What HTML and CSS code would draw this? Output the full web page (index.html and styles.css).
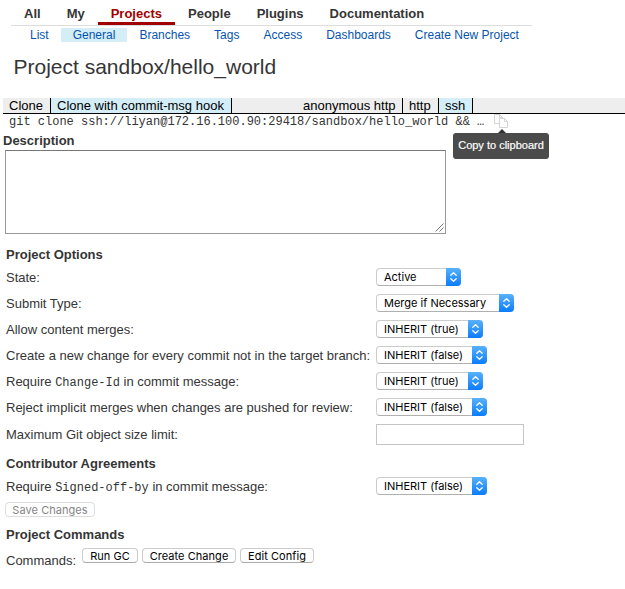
FILE: index.html
```
<!DOCTYPE html>
<html lang="en">
<head>
<meta charset="utf-8">
<title>Project sandbox/hello_world</title>
<link rel="stylesheet" href="styles.css">
</head>
<body>
<svg class="defs" width="0" height="0"><symbol id="arrows" viewBox="0 0 15 18"><path d="M4.8 7.3 7.5 4.8 10.2 7.3M4.8 10.7 7.5 13.2 10.2 10.7" fill="none" stroke="#fff" stroke-width="1.3" stroke-linecap="round" stroke-linejoin="round"/></symbol></svg>
<nav class="tabs"><a>All</a><a>My</a><a class="current">Projects</a><a>People</a><a>Plugins</a><a>Documentation</a></nav>
<nav class="links"><a>List</a><a class="current">General</a><a>Branches</a><a>Tags</a><a>Access</a><a>Dashboards</a><a>Create New Project</a></nav>
<h1>Project sandbox/hello_world</h1>
<div class="clone-bar">
  <span class="clone-tab">Clone</span><span class="clone-tab on">Clone with commit-msg hook</span>
  <span class="scheme anonymous">anonymous http</span><span class="scheme">http</span><span class="scheme on">ssh</span>
</div>
<div class="command"><code>git clone ssh://liyan@172.16.100.90:29418/sandbox/hello_world &amp;&amp; …</code>
  <span class="copy">
    <svg width="15" height="15" viewBox="0 0 15 15" fill="#fff" stroke="#d4d4d4"><path d="M.5.5h5l3 3v6h-8zM5.500.5v3h3"/><path d="M5.500 4.500h5l3 3v6h-8zM10.500 4.500v3h3"/></svg>
    <span class="tip">Copy to clipboard</span>
  </span>
</div>
<h2 class="desc-title">Description</h2>
<div class="textarea"><svg width="9" height="9" viewBox="0 0 9 9" stroke="#777" fill="none"><path d="M.5 8.500 8.500.5M4.500 8.500 8.500 4.500"/></svg></div>
<h2 class="options-title">Project Options</h2>
<div class="row"><label>State:</label><span class="select w-active">Active<i><svg><use href="#arrows"/></svg></i></span></div>
<div class="row"><label>Submit Type:</label><span class="select w-merge">Merge if Necessary<i><svg><use href="#arrows"/></svg></i></span></div>
<div class="row"><label>Allow content merges:</label><span class="select w-true">INHERIT (true)<i><svg><use href="#arrows"/></svg></i></span></div>
<div class="row"><label>Create a new change for every commit not in the target branch:</label><span class="select w-false">INHERIT (false)<i><svg><use href="#arrows"/></svg></i></span></div>
<div class="row"><label>Require <code>Change-Id</code> in commit message:</label><span class="select w-true">INHERIT (true)<i><svg><use href="#arrows"/></svg></i></span></div>
<div class="row"><label>Reject implicit merges when changes are pushed for review:</label><span class="select w-false">INHERIT (false)<i><svg><use href="#arrows"/></svg></i></span></div>
<div class="row size-row"><label>Maximum Git object size limit:</label><span class="field"></span></div>
<h2 class="agreements-title">Contributor Agreements</h2>
<div class="row"><label>Require <code>Signed-off-by</code> in commit message:</label><span class="select w-false">INHERIT (false)<i><svg><use href="#arrows"/></svg></i></span></div>
<div class="save"><span class="button disabled w-save">Save Changes</span></div>
<h2 class="commands-title">Project Commands</h2>
<div class="commands"><span class="commands-label">Commands:</span><span class="button w-gc">Run GC</span><span class="button w-change">Create Change</span><span class="button w-config">Edit Config</span></div>
</body>
</html>
```
FILE: styles.css
```
* { box-sizing: border-box; }
body { margin: 0; background: #fff; color: #353535; font: 13px/16px "Liberation Sans", Arial, sans-serif; }
.defs { display: block; height: 0; }
code { font: 12px/14px "Liberation Mono", monospace; }
.tabs { display: flex; width: 521px; height: 26px; margin-left: 11px; border-bottom: 1px solid #ddd; font-weight: bold; }
.tabs a { height: 25px; padding: 6px 13px 0; }
.tabs .current { color: #a00000; border-bottom: 3px solid #a00000; }
.links { display: flex; margin: 2px 0 0 18px; font-size: 12px; line-height: 14px; color: #0654ac; }
.links a { height: 14px; padding: 0 12px; white-space: nowrap; }
.links .current { background: #d4eef8; }
h1 { margin: 13px 0 0 13.5px; height: 24px; font-size: 21px; line-height: 24px; font-weight: normal; }
.clone-bar { display: flex; height: 16px; margin: 19px 0 0 3px; background: #eee; border-bottom: 1px solid #000; color: #000; line-height: 15px; white-space: nowrap; }
.clone-tab, .scheme { padding: 0 6px; border-right: 1px solid #000; }
.clone-tab { width: 48px; }
.clone-tab.on { width: 181px; }
.on { background: #d4eef8; }
.scheme { width: 36px; }
.scheme.anonymous { margin-left: 65px; width: 106px; }
.scheme.on { width: 34px; }
.command { display: flex; height: 19px; padding: 1px 0 0 9px; }
.command code { width: 485px; white-space: nowrap; }
.copy { position: relative; width: 15px; height: 15px; margin-top: -1px; }
.copy svg { display: block; }
.tip { position: absolute; left: -41px; top: 19px; width: 96px; height: 26px; border-radius: 3px; background: #4b4b4b; color: #fff; font-size: 11px; line-height: 25px; text-align: center; white-space: nowrap; -webkit-text-stroke: .2px #fff; }
.tip::before { content: ""; position: absolute; left: 45px; top: -4px; border: solid transparent; border-width: 0 4px 4px; border-bottom-color: #333; }
h2 { margin: 0 0 0 6px; font-size: 13px; line-height: 16px; }
.desc-title { margin-left: 3px; }
.textarea { display: flex; justify-content: flex-end; align-items: flex-end; width: 441px; height: 84px; margin: 1px 0 0 5px; padding: 1px; border: 1px solid #999; border-top-color: #777; }
.options-title { margin-top: 13px; margin-bottom: 2px; }
.row { display: grid; grid-template-columns: 370px auto; align-items: center; justify-content: start; height: 26px; margin-left: 6px; }
.row label { white-space: nowrap; }
.select { display: flex; justify-content: space-between; height: 18px; margin-bottom: 2px; padding-left: 7px; border: 1px solid #ccc; border-bottom-color: #b0b0b0; border-radius: 4px; font: 11px/16px Inter, Roboto, sans-serif; letter-spacing: 0; color: #000; white-space: nowrap; }
.select i { width: 15px; height: 18px; margin: -1px; border-radius: 0 4px 4px 0; background: linear-gradient(#58b2fb, #0a7cfc); }
.select svg { display: block; width: 15px; height: 18px; }
.w-active { width: 85px; }
.w-merge { width: 138px; }
.w-true { width: 107px; }
.w-false { width: 111px; }
.size-row { height: 28px; }
.field { width: 148px; height: 21px; margin-bottom: 2px; border: 1px solid #c5c5c5; }
.agreements-title { margin-top: 7px; margin-bottom: 2px; }
.save { margin: 2px 0 0 5px; }
.button { display: block; height: 15px; border: 1px solid #ccc; border-bottom-color: #aaa; border-radius: 4px; font: 11px/14px Inter, Roboto, sans-serif; letter-spacing: .05px; color: #000; text-align: center; white-space: nowrap; }
.button.disabled { color: #858585; border-color: #ddd; }
.w-save { width: 90px; }
.commands-title { margin-top: 10px; }
.commands { display: flex; height: 26px; margin: 5px 0 0 6px; gap: 4px; }
.commands-label { width: 72px; padding-top: 5px; }
.w-gc { width: 56px; }
.w-change { width: 94px; }
.w-config { width: 74px; }
```
